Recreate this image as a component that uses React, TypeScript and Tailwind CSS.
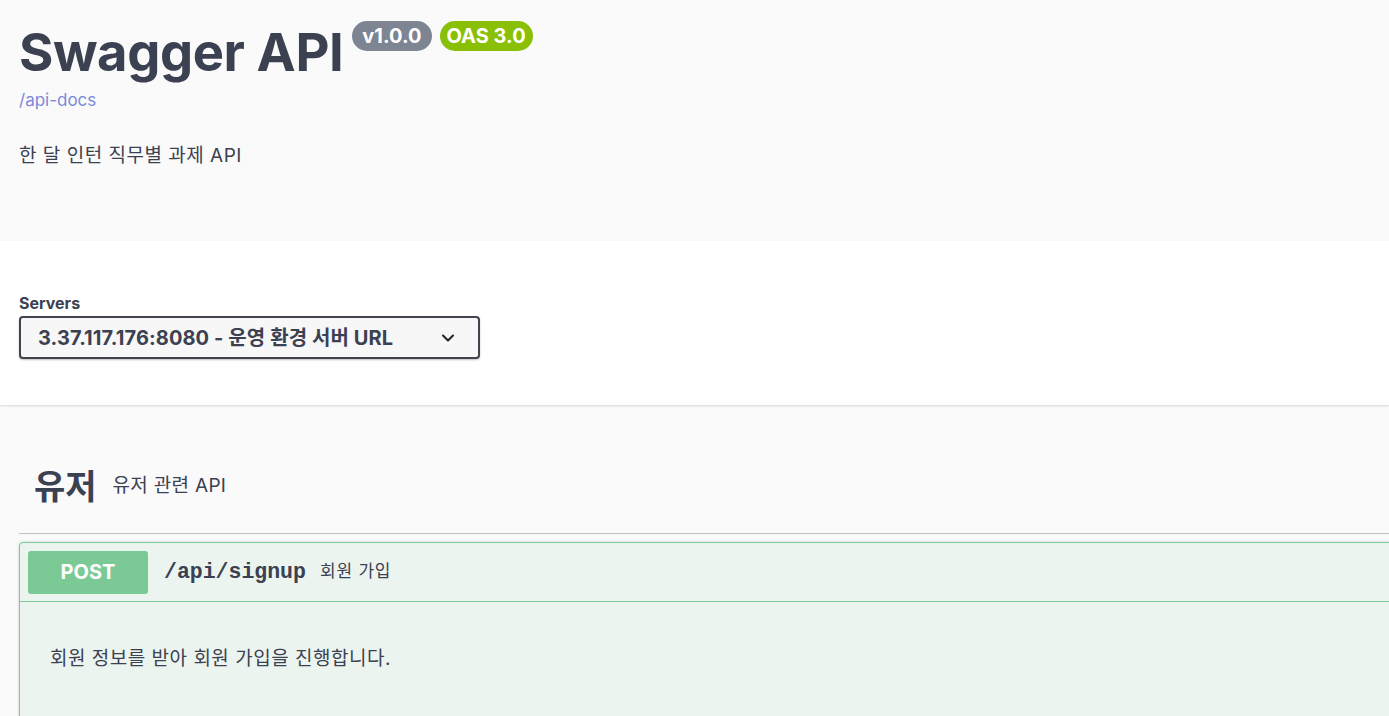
import { ChevronDown } from 'lucide-react';

const sans = 'font-["Inter","Noto_Sans_CJK_KR",sans-serif]';

function Info() {
  return (
    <section className="bg-[#fafafa] h-[241px]">
      <div className="w-[1460px] px-[19px] pt-[21px]">
        <div className="flex items-start">
          <h1 className="text-[52.5px] leading-[62px] font-bold text-[#3b4151] tracking-[-0.4px]">
            Swagger API
          </h1>
          <span className="ml-[9px] rounded-full bg-[#7d8492] px-[10px] h-[30px] leading-[30px] text-[20px] font-bold text-white">
            v1.0.0
          </span>
          <span className="ml-[8px] rounded-full bg-[#89bf04] px-[7px] h-[30px] leading-[30px] text-[20px] font-bold text-white">
            OAS 3.0
          </span>
        </div>
        <a className="block mt-[6px] text-[17px] leading-[22px] text-[#7c89d9]">/api-docs</a>
        <p className="mt-[32px] text-[19px] leading-[26px] text-[#3b4151] tracking-[0.5px]">
          한 달 인턴 직무별 과제 API
        </p>
      </div>
    </section>
  );
}

function Servers() {
  return (
    <section className="bg-white h-[164px] shadow-[0_1px_2px_0_rgba(0,0,0,0.15)] relative">
      <div className="w-[1460px] px-[19px] pt-[52px]">
        <div className="text-[16px] leading-[20px] font-bold text-[#3b4151]">Servers</div>
        <div className="mt-[3px] w-[461px] h-[43px] rounded-[4px] border-2 border-[#41444e] bg-[#f7f7f7] shadow-[0_1px_2px_0_rgba(0,0,0,0.25)] flex items-center pl-[17px] pr-[20px]">
          <span className="flex-1 text-[20px] font-bold text-[#3b4151] tracking-[0.1px]">
            3.37.117.176:8080 - 운영 환경 서버 URL
          </span>
          <ChevronDown size={20} strokeWidth={2.5} className="text-[#222]" />
        </div>
      </div>
    </section>
  );
}

function Operation() {
  return (
    <div className="mt-[8px] rounded-[4px] border border-[#7dcb97] bg-[#ecf4ef] shadow-[0_0_3px_rgba(0,0,0,0.19)]">
      <div className="flex items-center h-[59px] px-[8px] border-b border-[#7dcb97]">
        <span className="w-[120px] h-[43px] rounded-[3px] bg-[#7bc994] flex items-center justify-center text-[20px] font-bold text-white">
          POST
        </span>
        <span className='ml-[16px] font-["Liberation_Mono",monospace] text-[21.5px] font-semibold text-[#3b4151]'>
          /api/signup
        </span>
        <span className="ml-[14px] text-[17px] text-[#3b4151] tracking-[0.8px]">회원 가입</span>
      </div>
      <div className="h-[120px] px-[30px] pt-[44px]">
        <p className="text-[19px] leading-[26px] text-[#3b4151] tracking-[0.5px]">
          회원 정보를 받아 회원 가입을 진행합니다.
        </p>
      </div>
    </div>
  );
}

export default function App() {
  return (
    <div className={`${sans} min-h-screen bg-[#fafafa] overflow-hidden`}>
      <Info />
      <Servers />
      <div className="w-[1460px] px-[19px] pt-[58px]">
        <div className="flex items-center h-[46px] pl-[15px] pb-[24px] box-content border-b border-[#bfc1c5]">
          <h3 className="text-[34px] font-bold text-[#3b4151]">유저</h3>
          <span className="ml-[16px] text-[19px] text-[#3b4151] tracking-[0.3px]">유저 관련 API</span>
        </div>
        <Operation />
      </div>
    </div>
  );
}
